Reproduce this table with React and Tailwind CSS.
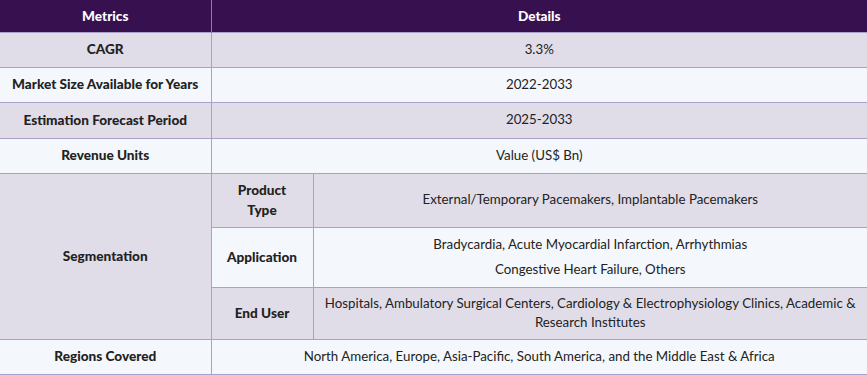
const rows = [
  { metric: 'CAGR', detail: '3.3%', h: 'h-[35px]' },
  { metric: 'Market Size Available for Years', detail: '2022-2033', h: 'h-[35px]' },
  { metric: 'Estimation Forecast Period', detail: '2025-2033', h: 'h-[36px]' },
  { metric: 'Revenue Units', detail: 'Value (US$ Bn)', h: 'h-[35px]' },
];

const cell = 'border border-[#aba0c9] text-center align-middle';
const head = 'font-black text-[13.6px]';

const App = () => {
  return (
    <div className="w-[867px] bg-white font-['Lato',sans-serif] text-[13.3px] text-[#222]">
      <table className="w-full table-fixed border-collapse">
        <colgroup>
          <col className="w-[211px]" />
          <col className="w-[102px]" />
          <col />
        </colgroup>
        <thead>
          <tr className="h-[32px] bg-[#37114f] text-white">
            <th className={`border-r border-[#8e7cb0] ${head}`}>Metrics</th>
            <th colSpan={2} className={head}>Details</th>
          </tr>
        </thead>
        <tbody>
          {rows.map((r, i) => (
            <tr key={r.metric} className={`${r.h} ${i % 2 === 0 ? 'bg-[#e0dde9]' : 'bg-[#f4f8fc]'}`}>
              <td className={`${cell} border-l-0 ${head}`}>{r.metric}</td>
              <td colSpan={2} className={`${cell} border-r-0`}>{r.detail}</td>
            </tr>
          ))}
          <tr className="h-[54px] bg-[#e0dde9]">
            <td rowSpan={3} className={`${cell} border-l-0 ${head}`}>Segmentation</td>
            <td className={`${cell} ${head} leading-[20px]`}>Product<br />Type</td>
            <td className={`${cell} border-r-0`}>External/Temporary Pacemakers, Implantable Pacemakers</td>
          </tr>
          <tr className="h-[60px] bg-[#f4f8fc]">
            <td className={`${cell} ${head}`}>Application</td>
            <td className={`${cell} border-r-0 leading-[25px]`}>
              Bradycardia, Acute Myocardial Infarction, Arrhythmias<br />Congestive Heart Failure, Others
            </td>
          </tr>
          <tr className="h-[52px] bg-[#e0dde9]">
            <td className={`${cell} ${head}`}>End User</td>
            <td className={`${cell} border-r-0 leading-[19px] px-2`}>
              Hospitals, Ambulatory Surgical Centers, Cardiology &amp; Electrophysiology Clinics, Academic &amp; Research Institutes
            </td>
          </tr>
          <tr className="h-[35px] bg-[#f4f8fc]">
            <td className={`${cell} border-l-0 ${head}`}>Regions Covered</td>
            <td colSpan={2} className={`${cell} border-r-0`}>
              North America, Europe, Asia-Pacific, South America, and the Middle East &amp; Africa
            </td>
          </tr>
        </tbody>
      </table>
    </div>
  );
};

export default App;
